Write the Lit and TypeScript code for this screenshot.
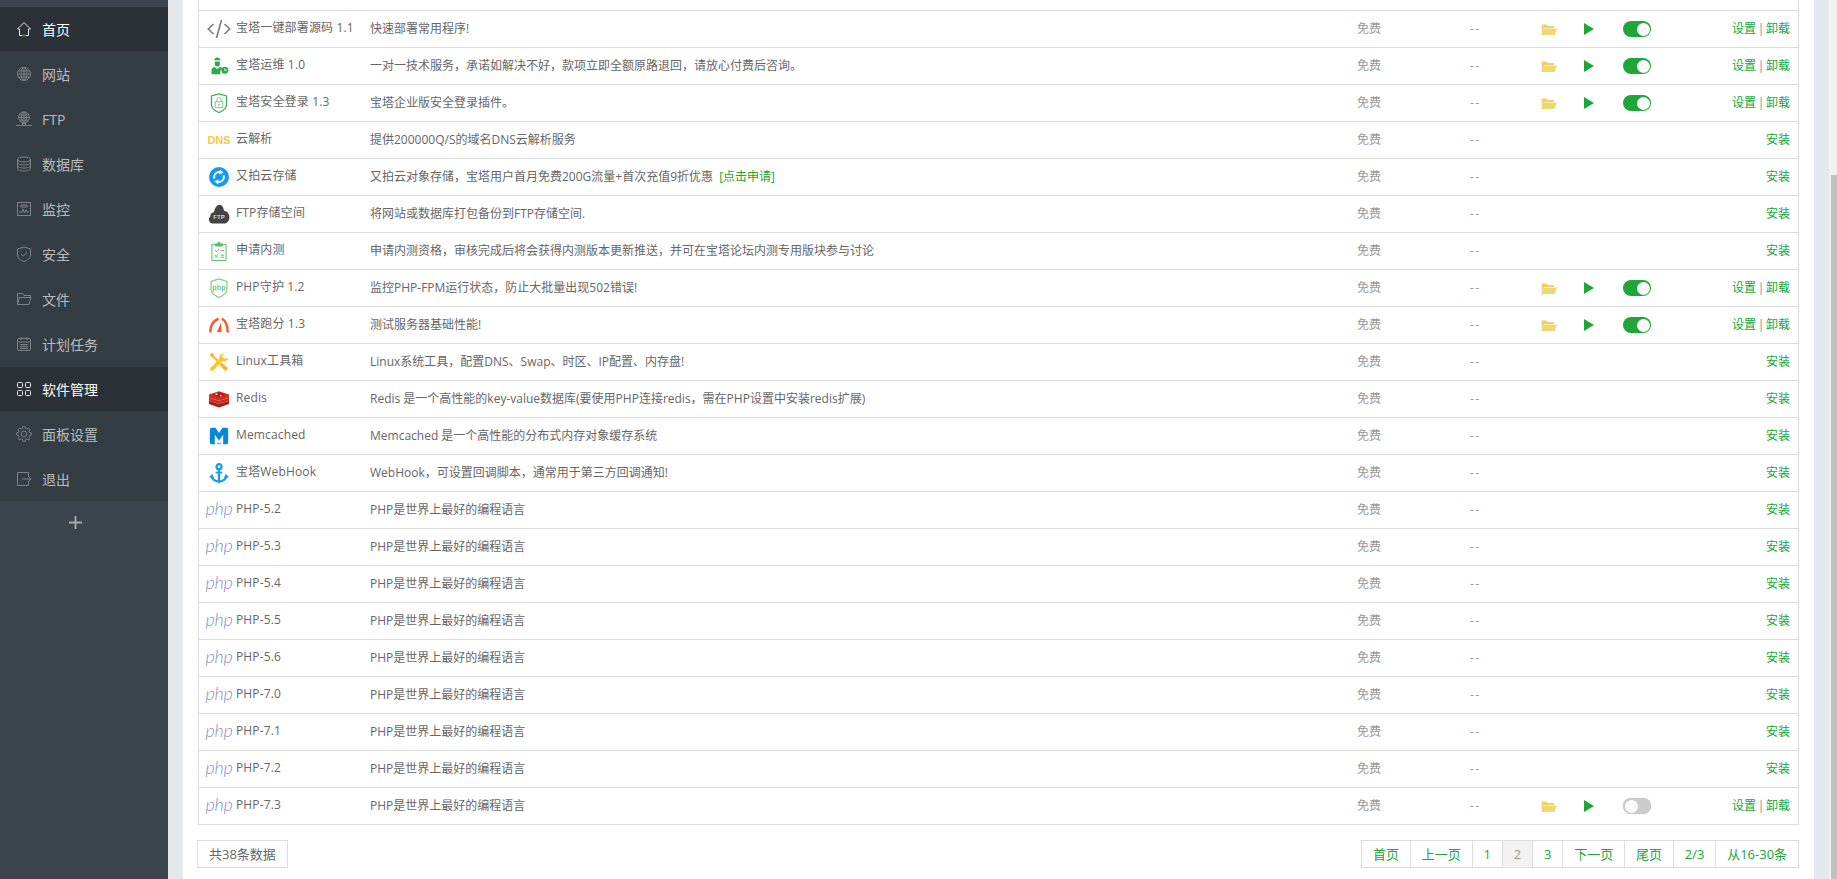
import { LitElement, html, css, svg } from "lit";
import { customElement } from "lit/decorators.js";

function gearPath() {
  const pts: string[] = [];
  const n = 8;
  for (let i = 0; i < n; i++) {
    const a = (i / n) * Math.PI * 2;
    const w = Math.PI / n;
    const p = (r: number, t: number) => `${(8 + r * Math.cos(t)).toFixed(2)} ${(8 + r * Math.sin(t)).toFixed(2)}`;
    pts.push(p(5.6, a - w * 0.75), p(7.4, a - w * 0.4), p(7.4, a + w * 0.4), p(5.6, a + w * 0.75));
  }
  return "M" + pts.join("L") + "Z";
}

const icons: Record<string, any> = {
  top: svg`<svg viewBox="0 0 24 24"><path d="M4 3h16v8c0 5-4 8-8 10-4-2-8-5-8-10z" fill="none" stroke="#6cc76c" stroke-width="1.500"/></svg>`,
  code: svg`<svg class="wide" viewBox="0 0 24 20" fill="none" stroke="#808080" stroke-width="1.700"><path d="M6.500 5 1.300 10l5.200 5M17.500 5l5.200 5-5.200 5M14.500 1 9.500 19"/></svg>`,
  ops: svg`<svg viewBox="0 0 24 24"><path d="M6 3.500 10 1.500l4 2-1 1.500H7z" fill="#2da84a"/><path d="M7 6.500h6v3a3 3 0 0 1-6 0z" fill="#2da84a"/><path d="M3 22v-5c0-2 2-3.500 4-3.800l3 2.800 3-2.800c1.300.2 2.500.8 3.200 1.800A5.500 5.500 0 0 0 14 22z" fill="#2da84a"/><circle cx="19" cy="17" r="4.200" fill="#2da84a"/><path d="M19 15v2.200h2" stroke="#fff" fill="none" stroke-width="1.200"/></svg>`,
  lock: svg`<svg viewBox="0 0 24 24" fill="none"><path d="M3 3.500 12 1l9 2.500V14c0 4.500-4.500 7.500-9 9.500-4.500-2-9-5-9-9.500z" stroke="#3eaf58" stroke-width="1.500"/><rect x="7.500" y="10.500" width="9" height="7" stroke="#7cc98e" stroke-width="1.200"/><path d="M9.500 10.500V8a2.500 2.500 0 0 1 5 0v2.500" stroke="#7cc98e" stroke-width="1.200"/><circle cx="12" cy="14" r="1.100" fill="#7cc98e"/></svg>`,
  upyun: svg`<svg viewBox="0 0 24 24"><circle cx="12" cy="12" r="12" fill="#0d9bf6"/><path d="M6.500 14a6 6 0 0 1 8-7.500M17.500 10a6 6 0 0 1-8 7.500" fill="none" stroke="#fff" stroke-width="2.200"/><path d="m13 3 4.500 3.800L12.500 9zM11 21l-4.500-3.800 5-2.200z" fill="#fff"/></svg>`,
  cloud: svg`<svg class="cl" viewBox="0 0 24 22"><path d="M5 21.500a4.500 4.500 0 0 1-2.500-8 4 4 0 0 1 4-4.500C7.500 4 10 .8 12.500.8c3 0 4.500 3.200 5 6.700 3.500.5 6 3.500 6 7 0 3.700-2.500 7-6 7z" fill="#444"/><text x="12" y="16.500" text-anchor="middle" font-family="Liberation Sans" font-weight="700" font-size="6.500" fill="#ddd">FTP</text></svg>`,
  clip: svg`<svg viewBox="0 0 24 24" fill="none" stroke="#56bd6a" stroke-width="1.200"><path d="M8 4H3.500v19.500h17V4H16"/><path d="M8 6V3.500h2.500L12 1l1.500 2.500H16V6z" fill="#56bd6a"/><path d="m7 11 2 2 3-3.500M14 11.500h4M7 16.500l3.500 3.500M10.500 16.500 7 20M14 17h4M14 19.500h4"/></svg>`,
  phps: svg`<svg viewBox="0 0 24 24"><path d="M2.500 4 12 1l9.500 3v10c0 4-4.500 7-9.500 9.500-5-2.500-9.500-5.500-9.500-9.500z" fill="none" stroke="#7ecf84" stroke-width="1.400"/><text x="12" y="14.500" text-anchor="middle" font-family="Liberation Sans" font-weight="700" font-size="8.500" fill="#6cc676">php</text></svg>`,
  gauge: svg`<svg viewBox="0 0 24 24" fill="none" stroke-width="3"><path d="M1.500 21C1.500 13 5 7 11.500 4.500" stroke="#f4592f"/><path d="M15.500 4.500C20 7 22.500 13 22.500 21" stroke="#f4592f"/><path d="m9.500 20.500 5-11.500.6 11.500z" fill="#f0562f" stroke="none"/></svg>`,
  tools: svg`<svg viewBox="0 0 24 24"><path d="M1 3.500 3.500 1l2.500 2 .5 2.500L23 19.500l-3.500 3.500L5 6.500 2.500 6z" fill="#fbb810"/><path d="M23.500 6.500a6 6 0 0 1-8 5L5 22.500a2.500 2.500 0 0 1-3.500-3.500L12 8.500a6 6 0 0 1 7-7l-3.500 3.500 3 3z" fill="#fdc320" stroke="#fff" stroke-width=".7"/></svg>`,
  redis: svg`<svg viewBox="0 0 24 24"><g transform="translate(0 2) scale(1 .84)"><path d="M0 14.500 12 19l12-4.500V19l-12 5L0 19z" fill="#a41e11"/><path d="M0 10 12 14.500 24 10v4.500L12 19 0 14.500z" fill="#c6302b"/><path d="M0 5.500 12 1l12 4.500V10l-12 4.500L0 10z" fill="#d82c20"/><path d="M12 2.500 4 5.800 12 9l8-3.200z" fill="#a41e11"/><circle cx="9" cy="5" r="1.300" fill="#fff"/><circle cx="14" cy="7" r="1" fill="#fff"/></g></svg>`,
  mem: svg`<svg viewBox="0 0 24 24"><path d="M3.500 2h4.300L12 8.500 16.200 2h4.300C22 2 23 3 23 4.500V19.500c0 1.500-1 2.500-2.500 2.500H17V10.500l-5 7-5-7V22H3.500C2 22 1 21 1 19.500V4.500C1 3 2 2 3.500 2z" fill="#0787d7"/><path d="M10 22v-2h1.500v2zM12.500 22v-2H14v2z" fill="#0787d7"/></svg>`,
  anchor: svg`<svg viewBox="0 0 24 24" fill="none" stroke="#1d9ee0" stroke-width="2.800"><circle cx="12" cy="4.500" r="3"/><path d="M12 7.500V22"/><path d="M8 11.500h8" stroke-width="2.200"/><path d="M3 16c1 4 4.500 6 9 6.500 4.500-.5 8-2.500 9-6.500"/><path d="m0 17 4-4 2 5zM24 17l-4-4-2 5z" fill="#1d9ee0" stroke="none"/></svg>`,
};
const nav: Record<string, any> = {
  home: svg`<path d="M8 1.500 1.500 8H3.500v6.500h9V8h2z"/><path d="M6 14.500h4" stroke="#20a53a" stroke-width="1.500"/>`,
  globe: svg`<circle cx="8" cy="8" r="6.500"/><ellipse cx="8" cy="8" rx="3" ry="6.500"/><path d="M1.500 8h13M2.500 5h11M2.500 11h11M8 1.500v13"/>`,
  ftp: svg`<circle cx="8" cy="6.500" r="5.500"/><ellipse cx="8" cy="6.500" rx="2.500" ry="5.500"/><path d="M2.500 6.500h11M3.500 4h9M3.500 9h9M8 1v11M0 14.500h16"/><rect x="6.500" y="12.500" width="3" height="2"/>`,
  db: svg`<ellipse cx="8" cy="3.500" rx="6.500" ry="2.500"/><path d="M1.500 3.500v9c0 1.400 2.900 2.500 6.500 2.500s6.500-1.100 6.500-2.500v-9M1.500 6.500C1.500 7.900 4.400 9 8 9s6.500-1.100 6.500-2.500M1.500 9.500C1.500 10.900 4.400 12 8 12s6.500-1.100 6.500-2.500"/>`,
  mon: svg`<rect x="1.500" y="1.500" width="13" height="13"/><path d="M3 11h3l1-3 1.500 4 1.500-3 .8 2H13M5 4h6v2H5z"/>`,
  shield: svg`<path d="M8 1 1.500 3v6c0 3 3 5.500 6.500 6.500 3.500-1 6.500-3.500 6.500-6.500V3z"/><path d="m5 8 2.300 2.300L11 6"/>`,
  folder: svg`<path d="M1.500 13.500v-11h5l1.500 2h6.500v2M1.500 13.500h11.500l2-7H3.500z"/>`,
  cal: svg`<rect x="1.500" y="2.500" width="13" height="12" rx="1.500"/><path d="M1.500 6h13M5 1v3M11 1v3M4 8.500h8M4 10.500h8M4 12.500h8" />`,
  soft: svg`<rect x="1.500" y="1.500" width="5" height="5" rx="1"/><rect x="9.500" y="1.500" width="5" height="5" rx="1"/><rect x="1.500" y="9.500" width="5" height="5" rx="1"/><rect x="9.500" y="9.500" width="5" height="5" rx="1"/>`,
  gear: svg`<path d="${gearPath()}"/><circle cx="8" cy="8" r="2.800"/>`,
  exit: svg`<path d="M12.500 5V1.500h-11v13h11V11M6 8h9M12 5l3 3-3 3"/>`,
};
const menu = [
  ["home", "首页", true], ["globe", "网站"], ["ftp", "FTP"], ["db", "数据库"], ["mon", "监控"], ["shield", "安全"],
  ["folder", "文件"], ["cal", "计划任务"], ["soft", "软件管理", true], ["gear", "面板设置"], ["exit", "退出"],
] as [string, string, boolean?][];

const PHP = "PHP是世界上最好的编程语言";
const rows: [string, string, any, boolean?, boolean?][] = [
  ["top", "", "", true],
  ["code", "宝塔一键部署源码 1.1", "快速部署常用程序!", true],
  ["ops", "宝塔运维 1.0", "一对一技术服务，承诺如解决不好，款项立即全额原路退回，请放心付费后咨询。", true],
  ["lock", "宝塔安全登录 1.3", "宝塔企业版安全登录插件。", true],
  ["dns", "云解析", "提供200000Q/S的域名DNS云解析服务"],
  ["upyun", "又拍云存储", html`又拍云对象存储，宝塔用户首月免费200G流量+首次充值9折优惠 <a>[点击申请]</a>`],
  ["cloud", "FTP存储空间", "将网站或数据库打包备份到FTP存储空间."],
  ["clip", "申请内测", "申请内测资格，审核完成后将会获得内测版本更新推送，并可在宝塔论坛内测专用版块参与讨论"],
  ["phps", "PHP守护 1.2", "监控PHP-FPM运行状态，防止大批量出现502错误!", true],
  ["gauge", "宝塔跑分 1.3", "测试服务器基础性能!", true],
  ["tools", "Linux工具箱", "Linux系统工具，配置DNS、Swap、时区、IP配置、内存盘!"],
  ["redis", "Redis", "Redis 是一个高性能的key-value数据库(要使用PHP连接redis，需在PHP设置中安装redis扩展)"],
  ["mem", "Memcached", "Memcached 是一个高性能的分布式内存对象缓存系统"],
  ["anchor", "宝塔WebHook", "WebHook，可设置回调脚本，通常用于第三方回调通知!"],
  ...["5.2", "5.3", "5.4", "5.5", "5.6", "7.0", "7.1", "7.2"].map((v) => ["php", `PHP-${v}`, PHP] as [string, string, any]),
  ["php", "PHP-7.3", PHP, true, true],
];
const pages = ["首页", "上一页", "1", "2", "3", "下一页", "尾页", "2/3", "从16-30条"];

@customElement("app-root")
export class AppRoot extends LitElement {
  static styles = css`
    :host { display: flex; width: 1837px; height: 879px; overflow: hidden; background: #e4e8ec;
      font: 12px/1.5 "Open Sans", "Noto Sans CJK SC", sans-serif; color: #666; }
    a { color: #20a53a; text-decoration: none; margin-left: 3px; }
    .side { width: 168px; flex: none; background: #3c444d; padding-top: 7px; box-sizing: border-box; color: #bbb; }
    .menu { background: #353d44; }
    .item { height: 44px; margin-bottom: 1px; display: flex; align-items: center; gap: 10px; padding-left: 16px; font-size: 14px; }
    .item:last-child { margin-bottom: 0; }
    .item.on { background: #2c3138; color: #fff; }
    .item svg { width: 16px; height: 16px; fill: none; stroke: #7d8388; stroke-width: 1; flex: none; }
    .item.on svg { stroke: #e8e8e8; }
    .plus { display: flex; padding: 15px 0 0 69px; }
    .plus svg { width: 13px; height: 13px; stroke: #aaa; stroke-width: 2; }
    .main { width: 1631px; margin-left: 15px; flex: none; background: #fff; padding: 0 15px; box-sizing: border-box; overflow: hidden; }
    .table { margin-top: -26px; border: 1px solid #ddd; border-top: 0; width: 1601px; box-sizing: border-box; }
    .row { display: grid; grid-template-columns: 163px 987px 113px 71px 43px 39px 60px 1fr; height: 36px; border-bottom: 1px solid #ddd; align-items: center; }
    .row:last-child { border-bottom: 0; }
    .cell { padding-left: 8px; white-space: nowrap; }
    .name { display: flex; align-items: center; gap: 5px; color: #666; }
    .name span { letter-spacing: .15px; }
    .name > span:last-child { margin-top: -2px; }
    .icon { width: 24px; height: 24px; flex: none; display: flex; align-items: center; justify-content: center; }
    .icon svg { width: 20px; height: 20px; display: block; }
    .icon svg.wide { width: 24px; height: 20px; }
    .icon svg.cl { width: 22px; height: 20px; }
    .name .dns { font: 700 11px "Liberation Sans", sans-serif; color: #f8c840; letter-spacing: 0; }
    .name .phpl { font: italic 300 18px "Lato", sans-serif; color: #8791c6; letter-spacing: -.2px; margin-top: -5px; }
    .price, .time { color: #999; }
    .time { letter-spacing: 1.500px; }
    .folder { width: 16px; height: 12px; display: block; }
    .play { width: 10px; height: 12px; display: block; }
    .toggle { width: 28px; height: 16px; border-radius: 8px; background: #20a53a; display: flex; align-items: center; justify-content: flex-end; padding: 0 1.500px; box-sizing: border-box; }
    .toggle i { width: 13px; height: 13px; border-radius: 50%; background: #fafafa; }
    .toggle.off { background: #ccc; justify-content: flex-start; box-shadow: 0 0 1px #bbb; }
    .act { text-align: right; padding: 0 8px 0 0; color: #20a53a; word-spacing: -1.400px; }
    .act b { font-weight: 400; color: #888; }
    .foot { display: flex; justify-content: space-between; margin: 15px 0 0 -1px; height: 28px; font-size: 13px; }
    .box { display: flex; border: 1px solid #ddd; line-height: 26px; box-sizing: border-box; height: 28px; }
    .box.total { padding: 0 11px; }
    .box.pager span { padding: 0 10.900px; color: #20a53a; border-left: 1px solid #ddd; }
    .box.pager span:first-child { border-left: 0; }
    .box.pager span.cur { background: #f2f2f2; color: #999; }
    .bar { width: 8px; flex: none; margin-left: 15px; background: #f1f1f1; padding-top: 175px; box-sizing: border-box; }
    .bar i { display: block; margin-left: 2px; height: 704px; background: #c1c1c1; }
  `;

  iconOf(k: string) {
    if (k === "dns") return html`<span class="icon dns">DNS</span>`;
    if (k === "php") return html`<span class="icon phpl">php</span>`;
    return html`<span class="icon">${icons[k]}</span>`;
  }

  render() {
    return html`
      <aside class="side">
        <div class="menu">
          ${menu.map(([i, t, on]) => html`<div class="item ${on ? "on" : ""}"><svg viewBox="0 0 16 16">${nav[i]}</svg><span>${t}</span></div>`)}
        </div>
        <div class="plus"><svg viewBox="0 0 14 14"><path d="M7 0v14M0 7h14"/></svg></div>
      </aside>
      <main class="main">
        <div class="table">
          ${rows.map(([ic, name, desc, inst, off]) => html`
            <div class="row">
              <div class="cell name">${this.iconOf(ic)}<span>${name}</span></div>
              <div class="cell">${desc}</div>
              <div class="cell price">${name ? "免费" : ""}</div>
              <div class="cell time">${name ? "--" : ""}</div>
              <div class="cell">${inst && name ? html`<svg class="folder" viewBox="0 0 16 12"><path d="M1 12 .5 1.500h5L7 3h6v2H3z" fill="#eed16a"/><path d="M0 12 2.800 5.500H16L13.500 12z" fill="#f1d76f"/></svg>` : ""}</div>
              <div class="cell">${inst && name ? html`<svg class="play" viewBox="0 0 10 12"><path d="M0 0l10 6-10 6z" fill="#20a53a"/></svg>` : ""}</div>
              <div class="cell">${inst && name ? html`<div class="toggle ${off ? "off" : ""}"><i></i></div>` : ""}</div>
              <div class="cell act">${!name ? "" : inst ? html`设置 <b>|</b> 卸载` : "安装"}</div>
            </div>`)}
        </div>
        <div class="foot">
          <div class="box total">共38条数据</div>
          <div class="box pager">${pages.map((p) => html`<span class="${p === "2" ? "cur" : ""}">${p}</span>`)}</div>
        </div>
      </main>
      <div class="bar"><i></i></div>
    `;
  }
}
